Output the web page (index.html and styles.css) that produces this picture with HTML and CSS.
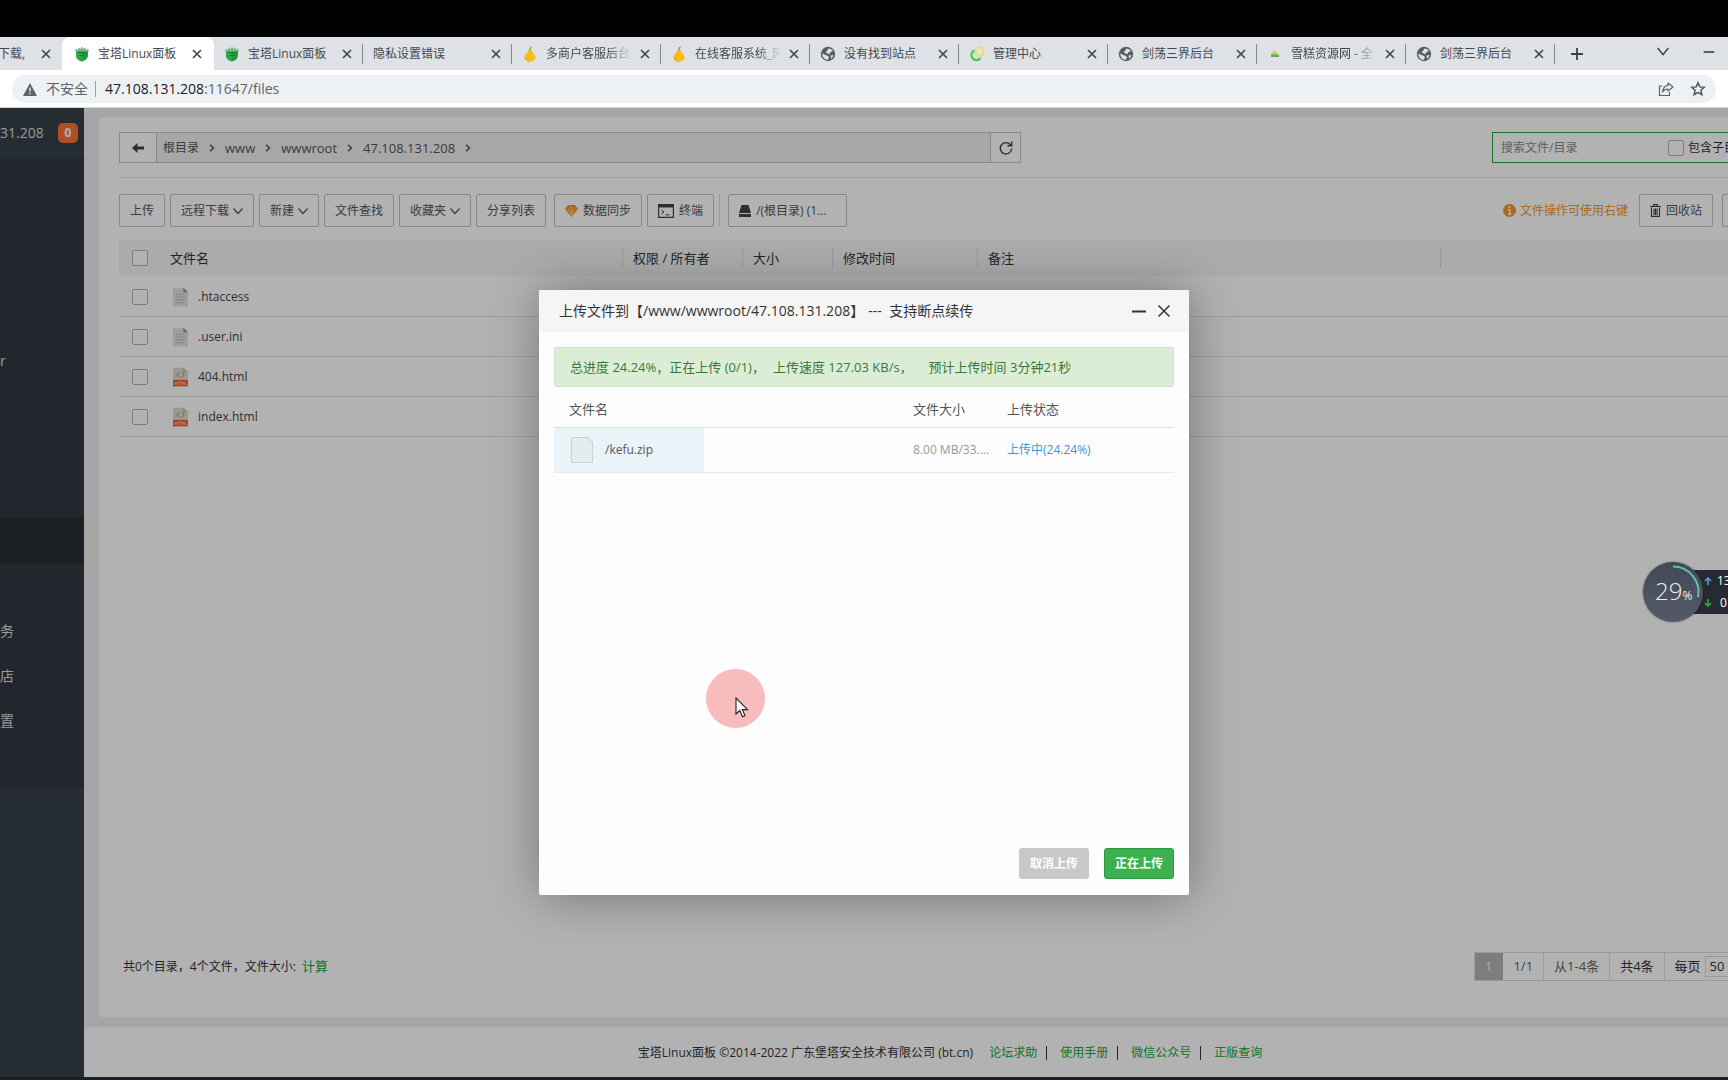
FILE: index.html
```html
<!DOCTYPE html>
<html lang="zh-CN">
<head>
<meta charset="utf-8">
<title>宝塔Linux面板</title>
<link rel="stylesheet" href="styles.css">
</head>
<body>
<svg class="defs" aria-hidden="true">
  <symbol id="i-close" viewBox="0 0 10 10"><path d="M1 1l8 8M9 1l-8 8" stroke="currentColor" stroke-width="1.7" fill="none"/></symbol>
  <symbol id="i-bt" viewBox="0 0 16 16"><path d="M2 5h12v4c0 3.500-2.500 5.500-6 6.500-3.500-1-6-3-6-6.500z" fill="#1e9a3e"/><path d="M2 5h6v10.500c-3.500-1-6-3-6-6.500z" fill="#2fa64c"/><path d="M1 5.500l1-3 1.500 1.500L5 1.500l1.500 1.500L8 .5 9.500 3 11 1.500 12.500 4 14 2.500l1 3z" fill="#7db58a"/><path d="M4 6.500h8M5.500 9.500h5" stroke="#137a2c"/></symbol>
  <symbol id="i-pear" viewBox="0 0 16 16"><path d="M8 4c2 0 2.300 1.500 3.200 3 .8 1.300 2.300 2.300 2.300 4.500 0 2.500-2.500 4-5.500 4s-5.500-1.500-5.500-4c0-2.200 1.500-3.200 2.300-4.500C5.700 5.500 6 4 8 4z" fill="#f9bd16"/><path d="M3.500 11c0 2.500 2 4 4.500 4.300" stroke="#f39a12" fill="none"/><path d="M8 4.500C7.800 3 8.300 1.500 9.500 .8" stroke="#7d9c2d" stroke-width="1.300" fill="none"/></symbol>
  <symbol id="i-globe" viewBox="0 0 16 16"><circle cx="8" cy="8" r="7.200" fill="#595c60"/><path d="M8.500 2.500c1.800 0 3.500 1 4.500 2.500l-2.500 1-1 2-2-.5L5.500 6l1.500-1zM2.300 7.500l3.200 1.500 2.500 1 1 1.500-1.500 2.500C4.500 13.500 2.300 11 2.300 7.500zM10.500 9.500l3-.5c-.3 1.500-1.200 2.800-2.300 3.700z" fill="#dee1e6"/></symbol>
  <symbol id="i-ring" viewBox="0 0 16 16"><circle cx="10.500" cy="5.500" r="4.300" fill="none" stroke="#f0e04a" stroke-width="2"/><path d="M5.500 4.500a5 5 0 1 0 6 7.500" fill="none" stroke="#45c95a" stroke-width="2.200"/></symbol>
  <symbol id="i-snow" viewBox="0 0 16 16"><path d="M4.500 9.500c0-3 1.500-4.500 4-4.500l3 4.500z" fill="#e2c23c"/><path d="M4 8.500h8V11H4z" fill="#57ae63"/></symbol>
  <symbol id="i-chev" viewBox="0 0 10 10"><path d="M.5 2.500l4.500 5 4.500-5" stroke="currentColor" stroke-width="1.200" fill="none"/></symbol>
  <symbol id="i-right" viewBox="0 0 6 8"><path d="M1 .7L4.500 4 1 7.300" stroke="currentColor" stroke-width="1.500" fill="none"/></symbol>
  <symbol id="i-text" viewBox="0 0 16 20"><path d="M0 0h11l5 5v15H0z" fill="#e4e4e4"/><path d="M11 0l5 5h-5z" fill="#8f8f8f"/><path d="M3 7h10M3 10h10M3 13h10M3 16h8" stroke="#c2c2c2" stroke-width="1.200"/></symbol>
  <symbol id="i-html" viewBox="0 0 16 20"><path d="M0 0h11l5 5v9H0z" fill="#e0dcd6"/><path d="M11 0l5 5h-5z" fill="#c3beb6"/><path d="M6.500 4.500L4 7.500l2.500 3M9.500 4.500l2.500 3-2.500 3" stroke="#b98a52" fill="none"/><path d="M0 13h16v7H0z" fill="#e4662e"/><path d="M2 15v3.500M4.300 15v3.500M2 16.700h2.300M5.500 15.200h2.600M6.800 15v3.500M9.200 18.500V15l1.200 2 1.200-2v3.500M13 15v3.300h1.800" stroke="#f5cdb8" stroke-width=".8" fill="none"/></symbol>
</svg>

<div class="letterbox"></div>

<header class="browser">
  <div class="tabs">
    <div class="tab tab-cut"><span class="tab-title">下载,</span><button class="tab-close" aria-label="关闭"><svg><use href="#i-close"/></svg></button></div>
    <div class="tab tab-active"><svg class="fav"><use href="#i-bt"/></svg><span class="tab-title">宝塔Linux面板</span><button class="tab-close" aria-label="关闭"><svg><use href="#i-close"/></svg></button></div>
    <div class="tab"><svg class="fav"><use href="#i-bt"/></svg><span class="tab-title">宝塔Linux面板</span><button class="tab-close" aria-label="关闭"><svg><use href="#i-close"/></svg></button></div>
    <div class="tab"><span class="tab-title">隐私设置错误</span><button class="tab-close" aria-label="关闭"><svg><use href="#i-close"/></svg></button></div>
    <div class="tab"><svg class="fav"><use href="#i-pear"/></svg><span class="tab-title fade">多商户客服后台</span><button class="tab-close" aria-label="关闭"><svg><use href="#i-close"/></svg></button></div>
    <div class="tab"><svg class="fav"><use href="#i-pear"/></svg><span class="tab-title fade">在线客服系统_网</span><button class="tab-close" aria-label="关闭"><svg><use href="#i-close"/></svg></button></div>
    <div class="tab"><svg class="fav"><use href="#i-globe"/></svg><span class="tab-title">没有找到站点</span><button class="tab-close" aria-label="关闭"><svg><use href="#i-close"/></svg></button></div>
    <div class="tab"><svg class="fav"><use href="#i-ring"/></svg><span class="tab-title">管理中心</span><button class="tab-close" aria-label="关闭"><svg><use href="#i-close"/></svg></button></div>
    <div class="tab"><svg class="fav"><use href="#i-globe"/></svg><span class="tab-title">剑荡三界后台</span><button class="tab-close" aria-label="关闭"><svg><use href="#i-close"/></svg></button></div>
    <div class="tab"><svg class="fav"><use href="#i-snow"/></svg><span class="tab-title fade">雪糕资源网 - 全</span><button class="tab-close" aria-label="关闭"><svg><use href="#i-close"/></svg></button></div>
    <div class="tab"><svg class="fav"><use href="#i-globe"/></svg><span class="tab-title">剑荡三界后台</span><button class="tab-close" aria-label="关闭"><svg><use href="#i-close"/></svg></button></div>
    <button class="tab-new" aria-label="新标签页"><svg viewBox="0 0 12 12"><path d="M6 0v12M0 6h12" stroke="#3c4043" stroke-width="1.800"/></svg></button>
    <div class="win">
      <button aria-label="搜索标签页"><svg viewBox="0 0 12 12"><path d="M2 3l4 5 4-5" stroke="#3c4043" stroke-width="1.100" fill="none"/></svg></button>
      <button aria-label="最小化"><svg viewBox="0 0 12 12"><path d="M2 6h8" stroke="#3c4043" stroke-width="1.200"/></svg></button>
    </div>
  </div>
  <div class="toolbar">
    <div class="omnibox">
      <svg class="warn" viewBox="0 0 14 13"><path d="M7 0l7 13H0z" fill="#5f6368"/><path d="M7 4.500v4M7 9.700v1.500" stroke="#edf1f4" stroke-width="1.300"/></svg>
      <span class="insecure">不安全</span>
      <span class="url"><b>47.108.131.208</b>:11647/files</span>
      <div class="omni-tools">
        <button aria-label="分享"><svg viewBox="0 0 16 16"><path d="M4.500 5H1.500v9.500h10V11" stroke="#5f6368" stroke-width="1.200" fill="none"/><path d="M10 2l5 4-5 4V8c-2.500 0-4.200.8-5.500 2.800C5 7.500 6.500 4.800 10 4.300z" stroke="#5f6368" stroke-width="1.200" fill="none" stroke-linejoin="round"/></svg></button>
        <button aria-label="收藏"><svg viewBox="0 0 16 16"><path d="M8 1.800l1.800 4.100 4.400.4-3.300 3 1 4.400L8 11.400l-3.900 2.300 1-4.400-3.300-3 4.400-.4z" stroke="#505458" stroke-width="1.500" fill="none"/></svg></button>
      </div>
    </div>
  </div>
</header>

<div class="page">
  <aside class="sidebar">
    <div class="host"><span>31.208</span><span class="badge">0</span></div>
    <nav class="menu">
      <a href="#"></a><a href="#"></a><a href="#"></a><a href="#"></a>
      <a href="#">r</a><a href="#"></a><a href="#"></a><a href="#"></a>
      <a href="#" class="current"></a><a href="#"></a>
      <a href="#">务</a><a href="#">店</a><a href="#">置</a><a href="#"></a>
    </nav>
  </aside>

  <div class="content">
    <main class="card">
      <div class="path-row">
        <div class="path">
          <button class="path-back" aria-label="返回"><svg viewBox="0 0 12 10"><path d="M5.500 0v3.500H12v3H5.500V10L0 5z" fill="#444"/></svg></button>
          <nav class="crumbs">
            <a href="#" class="root">根目录</a><svg><use href="#i-right"/></svg>
            <a href="#">www</a><svg><use href="#i-right"/></svg>
            <a href="#">wwwroot</a><svg><use href="#i-right"/></svg>
            <a href="#">47.108.131.208</a><svg><use href="#i-right"/></svg>
          </nav>
          <button class="path-refresh" aria-label="刷新"><svg viewBox="0 0 14 14"><path d="M11.800 4.200A5.700 5.700 0 1 0 12.700 7.500" stroke="#444" stroke-width="1.400" fill="none"/><path d="M12.700 .5v4.300H8.400" stroke="#444" stroke-width="1.400" fill="none"/></svg></button>
        </div>
        <div class="search">
          <input type="text" class="search-box" placeholder="搜索文件/目录" aria-label="搜索文件/目录">
          <label><input type="checkbox" class="check">包含子目录</label>
        </div>
      </div>

      <div class="actions">
        <div class="group">
          <button class="btn">上传</button>
          <button class="btn">远程下载<svg class="chev"><use href="#i-chev"/></svg></button>
          <button class="btn">新建<svg class="chev"><use href="#i-chev"/></svg></button>
          <button class="btn">文件查找</button>
          <button class="btn">收藏夹<svg class="chev"><use href="#i-chev"/></svg></button>
          <button class="btn">分享列表</button>
        </div>
        <div class="group">
          <button class="btn"><svg class="gem" viewBox="0 0 13 12"><path d="M3 0h7l3 4-6.500 8L0 4z" fill="#e99a2c"/><path d="M3.500 4l3 6.500 3-6.500M6.500 1v8" stroke="#fbe0b3" stroke-width=".8" fill="none"/></svg>数据同步</button>
          <button class="btn"><svg class="term" viewBox="0 0 16 14"><path d="M.6.6h14.800v12.800H.6z" stroke="#444" stroke-width="1.200" fill="none"/><path d="M0 0h16v3.500H0z" fill="#444"/><path d="M3.500 6l2.500 2-2.500 2M7.500 10.800h4" stroke="#444" fill="none"/></svg>终端</button>
        </div>
        <div class="group disk">
          <button class="btn"><svg class="drive" viewBox="0 0 12 12"><path d="M2.500 0h7L12 8H0z" fill="#444"/><path d="M0 9h12v3H0z" fill="#444"/></svg>/(根目录) (1...</button>
        </div>
        <div class="tail">
          <span class="tip"><svg viewBox="0 0 14 14"><circle cx="7" cy="7" r="7" fill="#f0982d"/><path d="M7 2.500v2M5.500 6.500H7.300V11M5.200 11h3.800" stroke="#fff" stroke-width="1.700" fill="none"/></svg>文件操作可使用右键</span>
          <button class="btn"><svg class="trash" viewBox="0 0 11 13"><path d="M0 2.500h11M3.500 2V.6h4V2M1.500 3.500v8.900h8V3.500M4 4.500v6.500M5.500 4.500v6.500M7 4.500v6.500" stroke="#444" stroke-width="1.100" fill="none"/></svg>回收站</button>
          <button class="btn btn-cut" aria-label="列表视图"></button>
        </div>
      </div>

      <table class="files">
        <colgroup><col class="c-check"><col class="c-name"><col class="c-perm"><col class="c-size"><col class="c-time"><col class="c-note"><col></colgroup>
        <thead>
          <tr><th><input type="checkbox" class="check" aria-label="全选"></th><th>文件名</th><th><span>权限 / 所有者</span></th><th><span>大小</span></th><th><span>修改时间</span></th><th><span>备注</span></th><th><span></span></th></tr>
        </thead>
        <tbody>
          <tr><td><input type="checkbox" class="check" aria-label=".htaccess"></td><td colspan="6"><a href="#" class="file"><svg><use href="#i-text"/></svg>.htaccess</a></td></tr>
          <tr><td><input type="checkbox" class="check" aria-label=".user.ini"></td><td colspan="6"><a href="#" class="file"><svg><use href="#i-text"/></svg>.user.ini</a></td></tr>
          <tr><td><input type="checkbox" class="check" aria-label="404.html"></td><td colspan="6"><a href="#" class="file"><svg><use href="#i-html"/></svg>404.html</a></td></tr>
          <tr><td><input type="checkbox" class="check" aria-label="index.html"></td><td colspan="6"><a href="#" class="file"><svg><use href="#i-html"/></svg>index.html</a></td></tr>
        </tbody>
      </table>

      <div class="summary">
        <p>共0个目录，4个文件，文件大小: <a href="#">计算</a></p>
        <div class="pager">
          <span class="on">1</span><span>1/1</span><span>从1-4条</span><span class="dark">共4条</span>
          <label class="dark">每页<input type="text" value="50"></label>
        </div>
      </div>
    </main>
    <footer class="foot">
      <span>宝塔Linux面板 ©2014-2022 广东堡塔安全技术有限公司 (bt.cn)</span>
      <nav><a href="#">论坛求助</a><a href="#">使用手册</a><a href="#">微信公众号</a><a href="#">正版查询</a></nav>
    </footer>
  </div>

  <div class="shade">
    <section class="dialog" role="dialog" aria-labelledby="dialog-title">
      <header class="dialog-head">
        <h1 id="dialog-title">上传文件到【/www/wwwroot/47.108.131.208】<span>---</span> 支持断点续传</h1>
        <button aria-label="最小化"><svg viewBox="0 0 14 14"><path d="M0 7.500h14" stroke="#333" stroke-width="2"/></svg></button>
        <button aria-label="关闭"><svg viewBox="0 0 14 14"><path d="M1.500 1.500l11 11M12.500 1.500l-11 11" stroke="#333" stroke-width="1.500"/></svg></button>
      </header>
      <div class="dialog-body">
        <p class="progress-note"><span>总进度 24.24%，正在上传 (0/1)，</span><span>上传速度 127.03 KB/s，</span><span class="eta">预计上传时间 3分钟21秒</span></p>
        <table class="uploads">
          <colgroup><col><col class="u-size"><col class="u-state"></colgroup>
          <thead><tr><th>文件名</th><th>文件大小</th><th>上传状态</th></tr></thead>
          <tbody>
            <tr style="--done: 24.24%">
              <td><span class="upload"><svg viewBox="0 0 22 26"><path d="M.5.5h17l4 4v21H.5z" fill="#e3edf0" stroke="#c6d2d6"/><path d="M17.500.5v4h4" fill="#f4f8f9" stroke="#c6d2d6"/></svg>/kefu.zip</span></td>
              <td class="amount">8.00 MB/33....</td>
              <td class="state">上传中(24.24%)</td>
            </tr>
          </tbody>
        </table>
      </div>
      <div class="dialog-foot">
        <button class="cancel">取消上传</button>
        <button class="go">正在上传</button>
      </div>
    </section>
  </div>
</div>

<div class="taskbar"></div>

<div class="pointer"><svg viewBox="0 0 14 21"><path d="M1 1v16l3.800-3.500 2.700 6.200 2.500-1.100-2.700-6H12.500z" fill="#fff" stroke="#222" stroke-width="1.100"/></svg></div>

<div class="monitor">
  <div class="gauge"><svg viewBox="0 0 60 60"><path d="M30 4.500A25.500 25.500 0 0 1 55 35" stroke="#5fc3b0" stroke-width="2" fill="none"/></svg><span>29</span><small>%</small></div>
  <div class="rates">
    <div><svg viewBox="0 0 8 8"><path d="M4 8V1.500M1 4l3-3 3 3" stroke="#4aa3df" stroke-width="1.600" fill="none"/></svg>13</div>
    <div><svg viewBox="0 0 8 8"><path d="M4 0v6.500M1 4l3 3 3-3" stroke="#2fa843" stroke-width="1.600" fill="none"/></svg><span class="down">0</span></div>
  </div>
</div>
</body>
</html>
```
FILE: styles.css
```css
* { box-sizing: border-box; }

body {
  margin: 0;
  min-height: 100vh;
  display: flex;
  flex-direction: column;
  position: relative;
  overflow: hidden;
  background: #fff;
  color: #333;
  font: 12px/20px "Open Sans", "Noto Sans CJK SC", sans-serif;
}

button, input { font: inherit; color: inherit; }
button { margin: 0; padding: 0; border: 0; background: none; }
a { color: inherit; text-decoration: none; }
p, h1 { margin: 0; }
svg { display: block; flex: none; }
.defs { position: absolute; width: 0; height: 0; }

.letterbox { height: 37px; background: #000; }

/* Browser chrome */
.tabs {
  display: flex;
  height: 33px;
  background: #dee1e6;
  color: #45494d;
}
.tab {
  display: flex;
  align-items: center;
  gap: 8px;
  flex: none;
  width: 149px;
  padding: 0 11px 0 10px;
  position: relative;
}
.tab::after {
  content: "";
  position: absolute;
  right: 0;
  top: 7px;
  width: 1px;
  height: 20px;
  background: #85898d;
}
.tab-cut { width: 62px; padding-left: 0; }
.tab-cut .tab-title { margin-left: -2px; }
.tab-active {
  width: 152px;
  padding: 0 12px;
  background: #fff;
  border-radius: 8px 8px 0 0;
}
.tab-cut::after, .tab-active::after { display: none; }
.fav { width: 16px; height: 16px; }
.tab-title { flex: 1; min-width: 0; white-space: nowrap; overflow: hidden; }
.fade { mask-image: linear-gradient(90deg, #000 72%, transparent); }
.tab-close svg { width: 10px; height: 10px; }
.tab-new { width: 44px; padding: 0 0 0 16px; }
.tab-new svg { width: 12px; height: 12px; }
.win { display: flex; align-items: flex-start; gap: 30px; margin-left: auto; padding: 7px 11px; }
.win svg { width: 16px; height: 16px; }

.toolbar { height: 38px; padding: 5px 12px 4px; border-bottom: 1px solid #d5d7d9; }
.omnibox {
  display: flex;
  align-items: center;
  height: 28px;
  padding: 0 10px 0 11px;
  border-radius: 14px;
  background: #edf1f4;
  font-size: 14px;
  color: #5f6368;
}
.warn { width: 14px; height: 13px; margin-right: 9px; }
.insecure { padding-right: 7px; border-right: 1px solid #9a9ea3; line-height: 16px; }
.url { margin-left: 9px; }
.url b { font-weight: 400; color: #202124; }
.omni-tools { display: flex; gap: 16px; margin-left: auto; }
.omni-tools svg { width: 16px; height: 16px; }

/* Panel */
.page { flex: 1; display: flex; position: relative; background: #eee; }
.sidebar { flex: none; width: 84px; background: #38424a; color: #dcdcdc; font-size: 14px; overflow: hidden; }
.host {
  display: flex;
  align-items: center;
  justify-content: space-between;
  height: 50px;
  padding: 0 6px 0 0;
  background: #363f48;
}
.badge {
  width: 20px;
  height: 20px;
  border-radius: 5px;
  background: #fb7231;
  color: #fff;
  font-size: 12px;
  font-weight: 700;
  text-align: center;
}
.menu { background: #323841; }
.menu a { display: block; height: 45px; line-height: 45px; }
.menu .current { background: #292f35; }

.content { flex: 1; min-width: 0; display: flex; flex-direction: column; }
.card {
  flex: 1;
  display: flex;
  flex-direction: column;
  margin: 9px 0 10px 15px;
  padding: 15px 0 36px 20px;
  border-radius: 4px 0 0 4px;
  background: #fff;
  overflow: hidden;
}

.path-row { display: flex; justify-content: space-between; padding-bottom: 14px; border-bottom: 1px solid #e6e6e6; }
.path { display: flex; width: 902px; height: 31px; border: 1px solid #c4c4c4; background: #f0f0f0; }
.path-back, .path-refresh { display: flex; align-items: center; justify-content: center; background: #fff; }
.path-back { width: 37px; border-right: 1px solid #c4c4c4; }
.path-back svg { width: 12px; height: 10px; }
.path-refresh { width: 30px; border-left: 1px solid #c4c4c4; }
.path-refresh svg { width: 14px; height: 14px; }
.crumbs { flex: 1; display: flex; align-items: center; gap: 10px; padding-left: 6px; color: #555; font-size: 13px; }
.crumbs svg { width: 6px; height: 8px; }
.crumbs .root { font-size: 12px; }

.search {
  display: flex;
  align-items: center;
  width: 236px;
  border: 1px solid #20a53a;
  border-right: 0;
  overflow: hidden;
}
.search-box { flex: none; width: 175px; padding: 0 0 0 8px; border: 0; outline: 0; background: none; }
.search-box::placeholder { color: #8a8a8a; opacity: 1; }
.search label { display: flex; align-items: center; gap: 4px; flex: none; white-space: nowrap; }

.check {
  appearance: none;
  display: block;
  flex: none;
  width: 16px;
  height: 16px;
  margin: 0;
  border: 1px solid #b4b4b4;
  border-radius: 2px;
  background: #fff;
}

.actions { display: flex; align-items: center; padding: 16px 0 13px; }
.group { display: flex; gap: 5px; margin-right: 8px; }
.btn {
  display: flex;
  align-items: center;
  gap: 5px;
  flex: none;
  height: 33px;
  padding: 0 10px;
  border: 1px solid #c0c0c0;
  border-radius: 2px;
  background: #fff;
  color: #555;
  white-space: nowrap;
}
.chev { width: 10px; height: 10px; margin-left: -1px; }
.gem { width: 13px; height: 12px; }
.term { width: 16px; height: 14px; }
.drive { width: 12px; height: 12px; }
.trash { width: 11px; height: 13px; }
.disk { margin-left: -3px; padding-left: 8px; border-left: 1px solid #ddd; }
.disk .btn { width: 119px; }
.tail { display: flex; align-items: center; gap: 9px; margin-left: auto; }
.tip { display: flex; align-items: center; gap: 4px; margin-right: 2px; color: #f0982d; }
.tip svg { width: 13px; height: 13px; }
.btn-cut { width: 6px; padding: 0; border-right: 0; border-radius: 2px 0 0 2px; }

.files { width: 100%; border-collapse: collapse; table-layout: fixed; }
.c-check { width: 41px; }
.c-name { width: 462px; }
.c-perm { width: 120px; }
.c-size { width: 90px; }
.c-time { width: 145px; }
.c-note { width: 463px; }
.files th { height: 36px; padding: 0 0 0 10px; background: #f5f5f5; font-size: 13px; font-weight: 400; text-align: left; }
.files th span { display: block; height: 20px; margin-left: -10px; padding-left: 10px; border-left: 1px solid #ddd; }
.files td { height: 40px; padding: 2px 0 0 13px; border-bottom: 1px solid #e2e2e2; }
.files th:first-child { padding-left: 13px; }
.file { display: flex; align-items: center; gap: 10px; color: #444; }
.file svg { width: 15px; height: 20px; }

.summary { display: flex; align-items: center; justify-content: space-between; margin-top: auto; padding-left: 4px; }
.summary a { margin-left: 3px; font-size: 13px; color: #20a53a; }
.pager {
  display: flex;
  width: 254px;
  height: 29px;
  line-height: 27px;
  border: 1px solid #ddd;
  border-right: 0;
  font-size: 13px;
  color: #666;
  white-space: nowrap;
  overflow: hidden;
}
.pager > * { flex: none; padding: 0 10px; border-right: 1px solid #ddd; }
.pager .on { margin: -1px 0 -1px -1px; padding: 0 11px; background: #b4b4b4; border: 0; color: #f4f4f4; line-height: 29px; }
.pager .dark { color: #333; }
.pager label { display: flex; align-items: center; gap: 4px; }
.pager input { width: 40px; height: 21px; padding: 0 4px; border: 1px solid #ddd; }

.foot {
  display: flex;
  align-items: center;
  justify-content: center;
  gap: 16px;
  height: 50px;
  padding: 2px 0 0 88px;
  background: #fff;
}
.foot nav { display: flex; align-items: center; color: #20a53a; }
.foot a + a { margin-left: 9px; padding-left: 13px; border-left: 1px solid #333; line-height: 14px; }

/* Upload dialog */
.shade {
  position: absolute;
  inset: 0;
  display: flex;
  align-items: center;
  justify-content: center;
  background: rgba(0, 0, 0, .3);
}
.dialog {
  display: flex;
  flex-direction: column;
  width: 650px;
  height: 605px;
  border-radius: 2px;
  background: #fdfdfd;
  box-shadow: 1px 1px 50px rgba(0, 0, 0, .35);
}
.dialog-head { display: flex; align-items: center; gap: 11px; height: 42px; padding: 0 18px 0 20px; background: #f5f5f5; border-bottom: 1px solid #eee; }
.dialog-head h1 { flex: 1; font-size: 14px; font-weight: 400; white-space: nowrap; }
.dialog-head h1 span { margin: 0 4px; }
.dialog-head svg { width: 14px; height: 14px; }
.dialog-body { flex: 1; padding: 15px 15px 0; }
.progress-note {
  display: flex;
  gap: 8px;
  height: 40px;
  padding: 0 15px;
  border: 1px solid #cfe6c6;
  border-radius: 2px;
  background: #dbeed5;
  color: #3c763d;
  font-size: 13px;
  line-height: 38px;
  white-space: nowrap;
}
.progress-note .eta { margin-left: 8px; }
.uploads { width: 100%; border-collapse: collapse; table-layout: fixed; }
.u-size { width: 94px; }
.u-state { width: 182px; }
.uploads th { height: 40px; padding: 5px 15px 0; border-bottom: 1px solid #ddd; color: #555; font-size: 13px; font-weight: 400; text-align: left; }
.uploads td { height: 45px; padding: 0 15px; border-bottom: 1px solid #e8e8e8; white-space: nowrap; }
.uploads tbody tr { background: linear-gradient(#e9f4f8, #e9f4f8) 0 0 / var(--done) 100% no-repeat; }
.uploads th + th, .uploads td + td { padding: 0 0 0 15px; }
.uploads th + th { padding-top: 5px; }
.upload { display: flex; align-items: center; gap: 12px; padding-left: 2px; color: #555; }
.upload svg { width: 22px; height: 26px; }
.uploads .amount { color: #999; }
.uploads .state { color: #3498db; }
.dialog-foot { display: flex; justify-content: flex-end; gap: 15px; padding: 0 15px 16px; }
.dialog-foot button { width: 70px; height: 31px; border-radius: 3px; color: #fff; font-weight: 700; }
.cancel { background: #c8c8c8; }
.go { background: #3bb14f; border: 1px solid #2d9a41; }

.taskbar { height: 3px; background: #1c1f24; }

/* Floating items above the page */
.pointer {
  position: absolute;
  left: 706px;
  top: 669px;
  width: 59px;
  height: 59px;
  padding: 28px 0 0 29px;
  border-radius: 50%;
  background: #f8bcbd;
}
.pointer svg { width: 14px; height: 21px; }

.monitor { position: absolute; right: 0; top: 562px; display: flex; align-items: center; width: 85px; }
.gauge {
  display: flex;
  align-items: baseline;
  flex: none;
  position: relative;
  z-index: 1;
  width: 60px;
  height: 60px;
  padding-left: 12px;
  border-radius: 50%;
  background: linear-gradient(#434855, #555a68);
  box-shadow: 0 0 2px rgba(0, 0, 0, .5);
  color: #f0f1f4;
  font-size: 24px;
  font-weight: 300;
  line-height: 58px;
}
.gauge svg { position: absolute; inset: 0; }
.gauge small { font-size: 12px; font-weight: 400; line-height: 20px; }
.rates { flex: none; width: 40px; margin-left: -15px; padding-left: 16px; background: #272a31; color: #fff; font-size: 12px; line-height: 22px; }
.rates div { display: flex; align-items: center; gap: 5px; white-space: nowrap; }
.rates svg { width: 8px; height: 8px; }
.rates .down { padding-left: 3px; }
```
